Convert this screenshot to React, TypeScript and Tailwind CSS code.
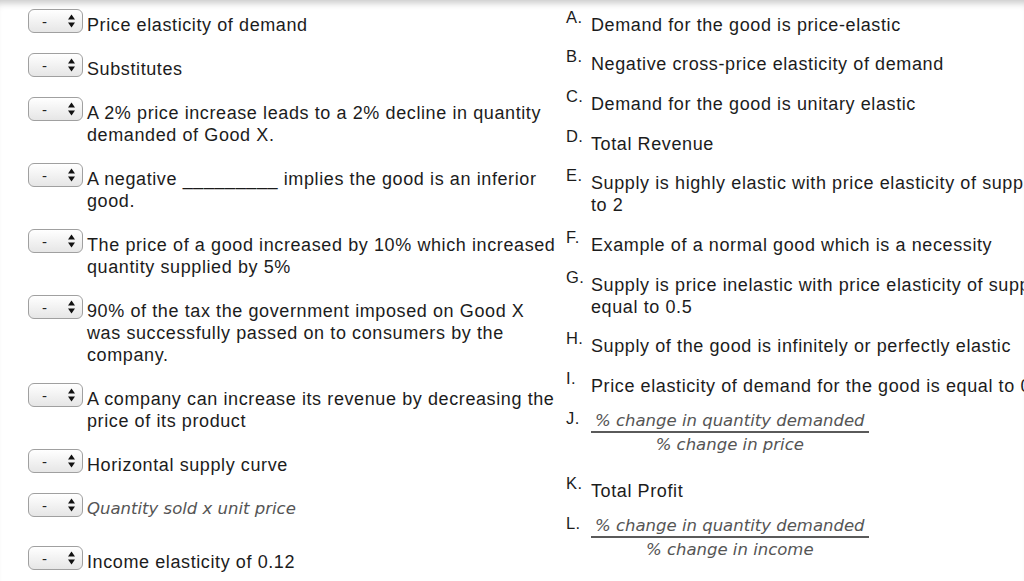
import React from 'react'

const questions = [
  { text: 'Price elasticity of demand' },
  { text: 'Substitutes' },
  { text: 'A 2% price increase leads to a 2% decline in quantity demanded of Good X.' },
  { text: 'A negative _________ implies the good is an inferior good.' },
  { text: 'The price of a good increased by 10% which increased quantity supplied by 5%' },
  { text: '90% of the tax the government imposed on Good X was successfully passed on to consumers by the company.' },
  { text: 'A company can increase its revenue by decreasing the price of its product' },
  { text: 'Horizontal supply curve' },
  { text: 'Quantity sold x unit price', math: true },
  { text: 'Income elasticity of 0.12' },
]

const answers = [
  { label: 'A', lines: ['Demand for the good is price-elastic'] },
  { label: 'B', lines: ['Negative cross-price elasticity of demand'] },
  { label: 'C', lines: ['Demand for the good is unitary elastic'] },
  { label: 'D', lines: ['Total Revenue'] },
  { label: 'E', lines: ['Supply is highly elastic with price elasticity of supply equal', 'to 2'] },
  { label: 'F', lines: ['Example of a normal good which is a necessity'] },
  { label: 'G', lines: ['Supply is price inelastic with price elasticity of supply', 'equal to 0.5'] },
  { label: 'H', lines: ['Supply of the good is infinitely or perfectly elastic'] },
  { label: 'I', lines: ['Price elasticity of demand for the good is equal to 0'] },
  { label: 'J', frac: ['% change in quantity demanded', '% change in price'] },
  { label: 'K', lines: ['Total Profit'] },
  { label: 'L', frac: ['% change in quantity demanded', '% change in income'] },
  { label: 'M', lines: ['Necessity'] },
]

const Picker = () => (
  <div className="mt-[-5px] flex h-[24px] w-[55px] shrink-0 items-center justify-between rounded-[6px] border border-[#a0a0a0] bg-gradient-to-b from-white to-[#e6e6e6] pl-[13px] pr-[7px]">
    <span className="text-[15px] leading-none text-[#222]">-</span>
    <svg width="7" height="14" viewBox="0 0 7 14">
      <path d="M3.5 0.5 L7 5.5 H0 Z" fill="#111" />
      <path d="M3.5 13.5 L7 8.5 H0 Z" fill="#111" />
    </svg>
  </div>
)

export default function App() {
  return (
    <div className="flex h-[581px] w-[1024px] overflow-hidden bg-white font-['Liberation_Sans',Arial,sans-serif] text-[18px] leading-[22px] tracking-[0.6px] text-[#1c1c1c] shadow-[inset_0_8px_7px_-5px_rgba(0,0,0,0.22)]">
      {/* questions */}
      <div className="flex w-[566px] shrink-0 flex-col gap-[22px] pl-[28px] pt-[14px]">
        {questions.map((q, i) => (
          <div key={i} className="flex items-start gap-[4px]">
            <Picker />
            {q.math ? (
              <div className="h-[31px] font-['DejaVu_Sans',sans-serif] text-[16.5px] italic leading-[22px] tracking-normal text-[#555]">
                {q.text}
              </div>
            ) : (
              <div className="w-[472px]">{q.text}</div>
            )}
          </div>
        ))}
      </div>

      {/* answers */}
      <div className="flex shrink-0 flex-col gap-[17.7px] pt-[13.5px]">
        {answers.map((a) => (
          <div key={a.label} className="flex items-start">
            <span className="mt-[-5px] w-[25px] shrink-0 text-[16.5px] leading-[17px] tracking-[0.4px]">{a.label}.</span>
            {a.frac ? (
              <div className="mt-[-2px] flex h-[50px] flex-col items-center font-['DejaVu_Sans',sans-serif] text-[16.5px] italic tracking-normal text-[#555]">
                <div className="border-b-[2px] border-[#5a5a5a] px-[4px] pb-[2px] leading-[16px]">{a.frac[0]}</div>
                <div className="leading-[24px]">{a.frac[1]}</div>
              </div>
            ) : (
              <div className="whitespace-nowrap">
                {a.lines!.map((l, j) => (
                  <div key={j}>{l}</div>
                ))}
              </div>
            )}
          </div>
        ))}
      </div>
    </div>
  )
}
